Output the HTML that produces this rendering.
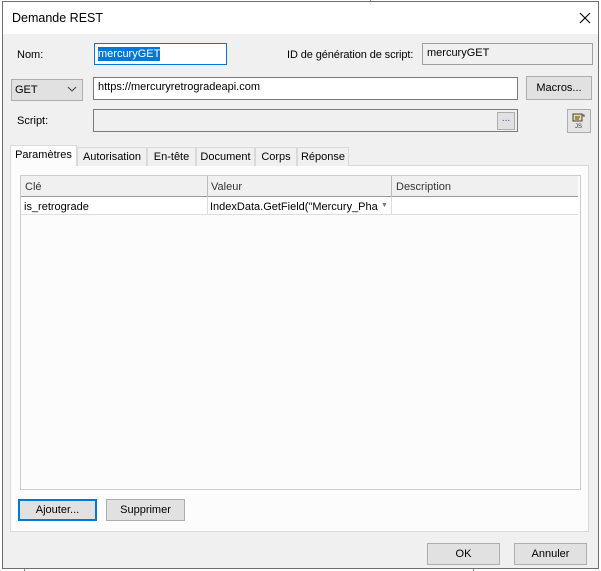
<!DOCTYPE html>
<html><head><meta charset="utf-8"><style>
*{box-sizing:border-box;margin:0;padding:0}
body{width:601px;height:571px;background:#fff;position:relative;overflow:hidden;font-family:"Liberation Sans",sans-serif;font-size:11px;color:#000}
.a{position:absolute;white-space:nowrap}
.win{left:2px;top:1px;width:597px;height:568px;background:#f0f0f0;border:1px solid #6e6e6e}
.title{left:0;top:0;width:595px;height:32px;background:#fff}
.btn{position:absolute;background:#e1e1e1;border:1px solid #adadad;text-align:center;line-height:20px}
.tb{position:absolute;border:1px solid #7a7a7a;background:#fff;padding-left:4px;line-height:19px}
.tab{position:absolute;top:147px;height:19px;border:1px solid #d9d9d9;border-bottom:none;background:#f0f0f0;text-align:center;line-height:18px}
</style></head><body>
<div class="a" style="left:370px;top:0;width:1px;height:2px;background:#888"></div>
<div class="a" style="left:24px;top:566px;width:1px;height:5px;background:#888"></div>
<div class="a" style="left:473px;top:566px;width:1px;height:5px;background:#888"></div>
<div class="a win">
<div class="a title"></div>
<div class="a" style="left:9px;top:9px;font-size:12.5px">Demande REST</div>
<svg class="a" style="left:576px;top:10px" width="12" height="12"><path d="M1 1L11 11M11 1L1 11" stroke="#000" stroke-width="1.1"/></svg>
</div>
<div class="a" style="left:17px;top:49px">Nom:</div>
<div class="a" style="left:94px;top:43px;width:133px;height:22px;border:1px solid #0078d7;background:#fff"><span style="position:absolute;left:3px;top:3px;background:#0078d7;color:#fff;line-height:14px">mercuryGET</span></div>
<div class="a" style="left:287px;top:49px;letter-spacing:-0.1px">ID de génération de script:</div>
<div class="tb" style="left:422px;top:43px;width:171px;height:22px;background:#f0f0f0;border-color:#a0a0a0">mercuryGET</div>
<div class="a" style="left:11px;top:79px;width:72px;height:22px;border:1px solid #adadad;background:#e1e1e1;padding-left:3px;line-height:20px">GET</div>
<svg class="a" style="left:67px;top:86px" width="10" height="6"><path d="M1 1L5 5L9 1" stroke="#444" fill="none"/></svg>
<div class="tb" style="left:93px;top:77px;width:425px;height:23px">https://mercuryretrogradeapi.com</div>
<div class="btn" style="left:526px;top:76px;width:66px;height:24px;line-height:22px">Macros...</div>
<div class="a" style="left:17px;top:115px">Script:</div>
<div class="tb" style="left:93px;top:109px;width:425px;height:23px;background:#f0f0f0"></div>
<div class="btn" style="left:497px;top:112px;width:18px;height:18px;line-height:12px;font-size:10px;color:#7030a0">...</div>
<div class="btn" style="left:567px;top:109px;width:24px;height:24px;background:#e5e5e5"></div>
<svg class="a" style="left:572px;top:113px" width="14" height="16"><rect x="1" y="1" width="9" height="7" fill="#f5d98a" stroke="#444"/><path d="M3 4H8M3 6H7M10 2h2v2" stroke="#444" fill="none"/><text x="3" y="15" font-size="6" font-family="Liberation Sans" fill="#333">JS</text></svg>
<div class="a" style="left:10px;top:165px;width:579px;height:367px;background:#fcfcfc;border:1px solid #d9d9d9"></div>
<div class="tab" style="left:10px;top:145px;height:21px;width:67px;background:#fcfcfc;z-index:2">Paramètres</div>
<div class="tab" style="left:77px;width:70px">Autorisation</div>
<div class="tab" style="left:147px;width:49px">En-tête</div>
<div class="tab" style="left:196px;width:59px">Document</div>
<div class="tab" style="left:255px;width:42px">Corps</div>
<div class="tab" style="left:297px;width:52px">Réponse</div>
<div class="a" style="left:20px;top:175px;width:561px;height:315px;border:1px solid #ccc;background:#fcfcfc"></div>
<div class="a" style="left:21px;top:176px;width:557px;height:21px;background:#f0f0f0;border-bottom:1px solid #999"></div>
<div class="a" style="left:207px;top:176px;width:1px;height:21px;background:#bbb"></div>
<div class="a" style="left:391px;top:176px;width:1px;height:21px;background:#bbb"></div>
<div class="a" style="left:25px;top:181px;color:#333">Clé</div>
<div class="a" style="left:211px;top:181px;color:#333">Valeur</div>
<div class="a" style="left:396px;top:181px;color:#333">Description</div>
<div class="a" style="left:21px;top:197px;width:557px;height:18px;background:#fff;border-bottom:1px solid #ddd"></div>
<div class="a" style="left:207px;top:197px;width:1px;height:18px;background:#ddd"></div>
<div class="a" style="left:391px;top:197px;width:1px;height:18px;background:#ddd"></div>
<div class="a" style="left:24px;top:201px">is_retrograde</div>
<div class="a" style="left:210px;top:201px;width:168px;overflow:hidden">IndexData.GetField("Mercury_Phase</div>
<div class="a" style="left:381px;top:202px;font-size:7px;color:#777">▼</div>
<div class="btn" style="left:18px;top:499px;width:79px;height:22px;border:2px solid #0078d7;line-height:18px">Ajouter...</div>
<div class="btn" style="left:106px;top:499px;width:79px;height:22px">Supprimer</div>
<div class="btn" style="left:427px;top:543px;width:73px;height:22px">OK</div>
<div class="btn" style="left:514px;top:543px;width:73px;height:22px">Annuler</div>
</body></html>
